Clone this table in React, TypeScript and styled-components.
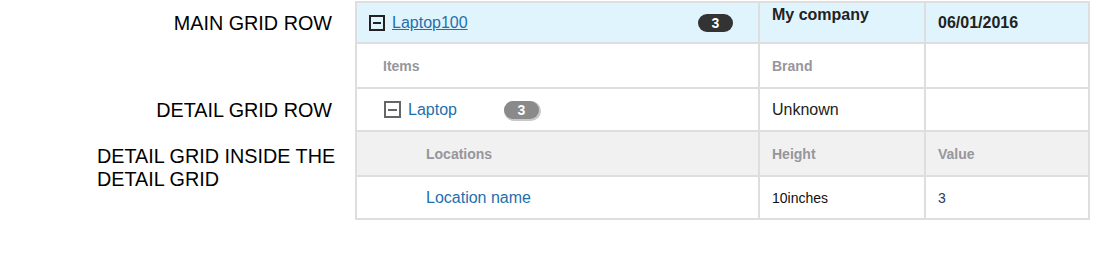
import { createGlobalStyle, styled } from 'styled-components';

const GlobalStyle = createGlobalStyle`
  body {
    margin: 0;
    background: #ffffff;
    font-family: "Liberation Sans", Arial, sans-serif;
  }
`;

const Page = styled.div`
  display: flex;
  align-items: flex-start;
  padding-top: 1px;
`;

const Labels = styled.div`
  display: grid;
  grid-template-rows: 44px 44px 43px 88px;
  width: 340px;
  margin-right: 15px;
  padding-left: 97px;
  box-sizing: border-box;
`;

const Label = styled.div<{ $row: number; $left?: boolean }>`
  grid-row: ${(p) => p.$row};
  align-self: ${(p) => (p.$left ? 'start' : 'center')};
  margin-top: ${(p) => (p.$left ? '13px' : '0')};
  padding-right: ${(p) => (p.$left ? '0' : '8px')};
  text-align: ${(p) => (p.$left ? 'left' : 'right')};
  font-size: 19.8px;
  line-height: 23px;
  color: #000;
`;

const Grid = styled.div`
  display: grid;
  grid-template-columns: 401px 164px 162px;
  grid-template-rows: 39px 43px 41px 43px 41px;
  gap: 2px;
  padding: 2px;
  background: #dedede;
`;

const Cell = styled.div<{ $bg?: string; $pad?: number; $top?: boolean }>`
  display: flex;
  align-items: ${(p) => (p.$top ? 'flex-start' : 'center')};
  padding: ${(p) => (p.$top ? '3px' : '0')} 12px 0 ${(p) => p.$pad ?? 12}px;
  background: ${(p) => p.$bg ?? '#ffffff'};
  font-size: 16px;
  color: #222;
`;

const Toggle = styled.span<{ $size: number; $color: string }>`
  display: inline-flex;
  align-items: center;
  justify-content: center;
  width: ${(p) => p.$size}px;
  height: ${(p) => p.$size}px;
  box-sizing: border-box;
  border: 2px solid ${(p) => p.$color};
  margin-right: 7px;
  flex-shrink: 0;

  &::after {
    content: '';
    width: ${(p) => p.$size - 8}px;
    height: 2px;
    background: ${(p) => p.$color};
  }
`;

const Link = styled.a<{ $underline?: boolean }>`
  color: #1f6fad;
  font-size: 16px;
  text-decoration: ${(p) => (p.$underline ? 'underline' : 'none')};
  cursor: pointer;
`;

const Badge = styled.span<{ $dark?: boolean; $gap: string }>`
  display: inline-flex;
  align-items: center;
  justify-content: center;
  width: 35px;
  height: 18px;
  border-radius: 9px;
  margin-left: ${(p) => p.$gap};
  background: ${(p) => (p.$dark ? '#333333' : '#8a8a8a')};
  box-shadow: ${(p) => (p.$dark ? 'none' : '1px 1px 0 1px #c8c8c8')};
  color: #fff;
  font-weight: bold;
  font-size: 14px;
`;

const Strong = styled.span`
  font-weight: bold;
  color: #222;
`;

const Head = styled.span`
  font-weight: bold;
  font-size: 14px;
  color: #96969b;
`;

const Small = styled.span<{ $color?: string }>`
  font-size: 14px;
  color: ${(p) => p.$color ?? '#111'};
`;

export default function App() {
  return (
    <>
      <GlobalStyle />
      <Page>
        <Labels>
          <Label $row={1}>MAIN GRID ROW</Label>
          <Label $row={3}>DETAIL GRID ROW</Label>
          <Label $row={4} $left>
            DETAIL GRID INSIDE THE DETAIL GRID
          </Label>
        </Labels>
        <Grid>
          <Cell $bg="#dff4fd">
            <Toggle $size={16} $color="#222" />
            <Link $underline>Laptop100</Link>
            <Badge $dark $gap="auto">3</Badge>
            <span style={{ width: 13 }} />
          </Cell>
          <Cell $bg="#dff4fd" $top>
            <Strong>My company</Strong>
          </Cell>
          <Cell $bg="#dff4fd">
            <Strong>06/01/2016</Strong>
          </Cell>

          <Cell $pad={26}>
            <Head>Items</Head>
          </Cell>
          <Cell>
            <Head>Brand</Head>
          </Cell>
          <Cell />

          <Cell $pad={27}>
            <Toggle $size={17} $color="#666" />
            <Link>Laptop</Link>
            <Badge $gap="47px">3</Badge>
          </Cell>
          <Cell>Unknown</Cell>
          <Cell />

          <Cell $bg="#f1f1f1" $pad={69}>
            <Head>Locations</Head>
          </Cell>
          <Cell $bg="#f1f1f1">
            <Head>Height</Head>
          </Cell>
          <Cell $bg="#f1f1f1">
            <Head>Value</Head>
          </Cell>

          <Cell $pad={69}>
            <Link>Location name</Link>
          </Cell>
          <Cell>
            <Small>10inches</Small>
          </Cell>
          <Cell>
            <Small $color="#2e3a55">3</Small>
          </Cell>
        </Grid>
      </Page>
    </>
  );
}
